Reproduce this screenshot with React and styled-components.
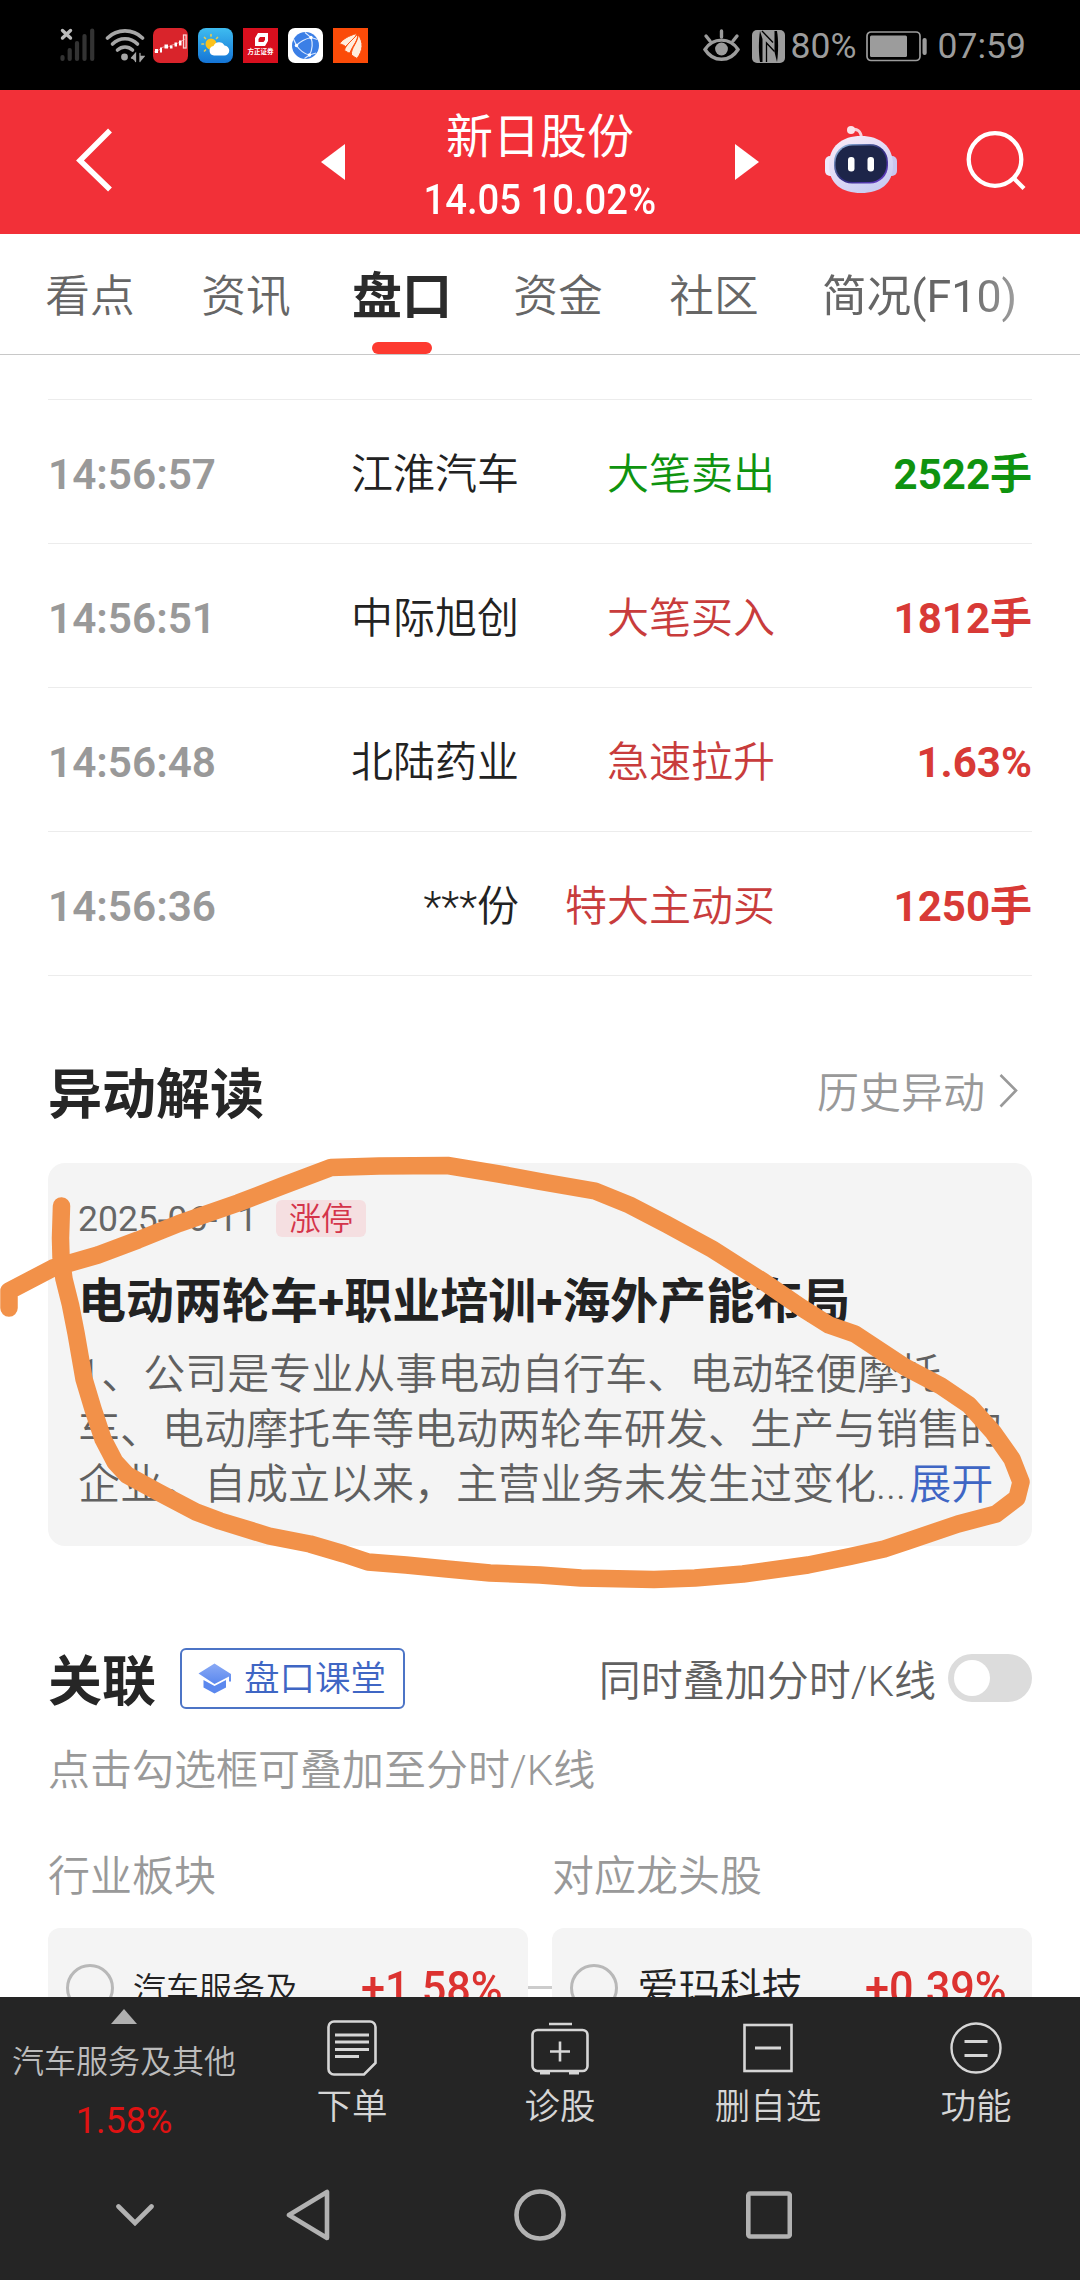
import React, { useState } from 'react'
import styled, { createGlobalStyle } from 'styled-components'

const trades = [
    { time: '14:56:57', name: '江淮汽车', type: '大笔卖出', value: '2522手', down: true },
    { time: '14:56:51', name: '中际旭创', type: '大笔买入', value: '1812手' },
    { time: '14:56:48', name: '北陆药业', type: '急速拉升', value: '1.63%' },
    { time: '14:56:36', name: '***份', type: '特大主动买', value: '1250手' },
]

const tabs = ['看点', '资讯', '盘口', '资金', '社区', '简况(F10)']

const related = [
    { label: '行业板块', name: '汽车服务及...', change: '+1.58%', small: true },
    { label: '对应龙头股', name: '爱玛科技', change: '+0.39%' },
]

const SignalIcon = () => (
    <svg width="36" height="35" viewBox="0 0 36 35">
        <g stroke="#333" strokeWidth="4.2" strokeLinecap="round">
            <path d="M2.5 29v2M9.700 22v9M17 15v16M24.500 8v23M32.200 2.500v28.500" />
        </g>
        <path d="M2.500 2.500l8 7.500M10.500 2.500l-8 7.500" stroke="#bbb" strokeWidth="3.4" strokeLinecap="round" />
    </svg>
)

const WifiIcon = () => (
    <svg width="40" height="35" viewBox="0 0 40 35" fill="none" stroke="#a6a6a6" strokeWidth="3.600" strokeLinecap="round">
        <path d="M2.500 10c9.500-9.500 25.500-9.500 35 0" />
        <path d="M7.500 16c7-7 18-7 25 0" />
        <path d="M12.500 22c4.500-4 10.500-4 15 0" />
        <circle cx="19.500" cy="29" r="3.400" fill="#a6a6a6" stroke="none" />
        <path d="M26.500 30l4-4.500v8M26.500 30h4M35 25.500v8M35 33l4-4.500h-4" strokeWidth="1.300" fill="#a6a6a6" />
    </svg>
)

const TrendAppIcon = () => (
    <svg width="35" height="35" viewBox="0 0 35 35">
        <rect width="35" height="35" rx="7" fill="#d9242b" />
        <path d="M1 24l5-2 4-3 5 0 4-2 4-1 4-2 5-3" fill="none" stroke="#f08a8d" strokeWidth="1" />
        <g fill="#fff">
            <rect x="2" y="21" width="3" height="4" />
            <rect x="7" y="19.500" width="2" height="5" />
            <rect x="11.500" y="16.500" width="3.500" height="4" />
            <rect x="17" y="17.500" width="2.500" height="3" />
            <rect x="21.500" y="14.500" width="2.500" height="4" />
            <rect x="26" y="12.500" width="2.500" height="5" />
        </g>
        <rect x="30.500" y="7" width="2.600" height="13" fill="none" stroke="#fbd3d4" strokeWidth="1.300" />
    </svg>
)

const WeatherAppIcon = () => (
    <svg width="35" height="35" viewBox="0 0 35 35">
        <defs>
            <linearGradient id="sky" x1="0" y1="0" x2="0" y2="1">
                <stop offset="0" stopColor="#3ebcf0" />
                <stop offset="1" stopColor="#1474d6" />
            </linearGradient>
        </defs>
        <rect width="35" height="35" rx="8" fill="url(#sky)" />
        <g stroke="#e3cc55" strokeWidth="1.700" strokeLinecap="round">
            <path d="M13 6.500v1.500M6.500 9.500l1 1M19.500 9.500l-1 1M4 16h1.500M6.500 23l1-1" />
        </g>
        <circle cx="13" cy="16" r="5.500" fill="#fbc21c" />
        <path d="M16 27.500a4.800 4.800 0 0 1-.500-9.500 6 6 0 0 1 11-.500 5 5 0 0 1-.500 10z" fill="#fff" />
    </svg>
)

const FounderAppIcon = () => (
    <FounderBox>
        <svg width="15" height="15" viewBox="0 0 15 15">
            <path d="M4 1h10v8l-3 5H1V6z" fill="#fff" />
            <path d="M6 5h5v3L9.500 10H4.500V7z" fill="#d80f1e" />
        </svg>
        <FounderName>方正证券</FounderName>
    </FounderBox>
)

const GlobeAppIcon = () => (
    <svg width="35" height="35" viewBox="0 0 35 35">
        <rect width="35" height="35" rx="7" fill="#fff" />
        <circle cx="17.500" cy="17.500" r="13.500" fill="#3b7fe6" />
        <g fill="none" stroke="#dceaff" strokeWidth="1.200">
            <path d="M17 4.500l6 5c2 6 1.500 12-1.500 17.500l-5 3.500M23 9.500C17 11 12 13.500 8.500 17.500c3.500 5 8 8.500 13 9.500l6.500-2M8.500 17.500L5.500 11M23 9.500l6.500 2" />
        </g>
        <circle cx="23" cy="9.500" r="1.700" fill="#fff" />
        <circle cx="8.500" cy="17.500" r="1.700" fill="#fff" />
        <circle cx="21.500" cy="27" r="1.700" fill="#fff" />
    </svg>
)

const FeatherAppIcon = () => (
    <svg width="35" height="35" viewBox="0 0 35 35">
        <rect width="35" height="35" fill="#fb4b08" />
        <g fill="#ffeedd" stroke="#fb4b08" strokeWidth="1">
            <path d="M6.500 16c3-5 9-8 17-10.500-1 6-7 9-11 13-2-1.500-4-2.500-6-2.500z" />
            <path d="M11.500 22.500c1-6 9-11 13-16.500 1 7-5 11-7.500 19-2 0-3.500-1.500-5.500-2.500z" />
            <path d="M18.500 27c-1-7 7-13 6.500-20.500 6 8 5 16-1 24-1.500-1-3.500-2-5.500-3.500z" />
        </g>
    </svg>
)

const EyeIcon = () => (
    <svg width="37" height="34" viewBox="0 0 37 34" fill="none" stroke="#9c9c9c" strokeWidth="3.400" strokeLinecap="round">
        <path d="M2 20.500c8-12.500 25-12.500 33 0-8 13-25 13-33 0z" />
        <circle cx="18.500" cy="20" r="6.400" fill="#9c9c9c" stroke="none" />
        <path d="M18.500 2v6M3 7l4 5M34 7l-4 5" />
    </svg>
)

const NfcIcon = () => (
    <svg width="33" height="33" viewBox="0 0 33 33">
        <rect width="33" height="33" rx="5" fill="#9c9c9c" />
        <path d="M8 1c-1.500 10-1.500 22 0 31h2.500V9z" fill="#000" />
        <path d="M25 32c1.500-10 1.500-22 0-31h-2.500v21z" fill="#000" />
        <path d="M14.500 32V13l8 8.500" stroke="#000" strokeWidth="1.300" fill="none" />
        <path d="M10 1l11 11.500" stroke="#000" strokeWidth="1.300" fill="none" />
    </svg>
)

const BatteryIcon = () => (
    <svg width="62" height="31" viewBox="0 0 62 31">
        <rect x="1" y="1" width="53" height="28.500" rx="4" fill="none" stroke="#9c9c9c" strokeWidth="1.700" />
        <rect x="4" y="4.500" width="37" height="21.500" rx="1.500" fill="#9c9c9c" />
        <rect x="56.500" y="7" width="4.200" height="17" rx="2" fill="#9c9c9c" />
    </svg>
)

const RobotIcon = () => (
    <svg width="74" height="70" viewBox="0 0 74 70">
        <defs>
            <linearGradient id="helmet" x1="0" y1="0" x2="0.600" y2="1">
                <stop offset="0" stopColor="#fbeef8" />
                <stop offset="0.500" stopColor="#e3dcf6" />
                <stop offset="1" stopColor="#c9cdf2" />
            </linearGradient>
            <linearGradient id="visor" x1="0" y1="0" x2="1" y2="1">
                <stop offset="0" stopColor="#a8d3f2" />
                <stop offset="0.500" stopColor="#2c2c78" />
                <stop offset="1" stopColor="#6b3fd0" />
            </linearGradient>
        </defs>
        <path d="M27 5c6-2 10 1 10.500 8" stroke="#f9cfd9" strokeWidth="3" fill="none" />
        <circle cx="27" cy="5" r="4" fill="#fbe2ea" />
        <rect x="1" y="31" width="13" height="20" rx="5" fill="#efe9fb" />
        <rect x="60" y="31" width="13" height="20" rx="5" fill="#c9c6ef" />
        <path d="M37 11c19 0 32 10 32 29s-13 28-32 28S5 59 5 40 18 11 37 11z" fill="url(#helmet)" />
        <rect x="10" y="19" width="54" height="39.500" rx="18" fill="url(#visor)" />
        <rect x="11.500" y="20.500" width="51" height="36.500" rx="17" fill="#1d2549" />
        <rect x="24" y="32" width="6.500" height="14.500" rx="3" fill="#fff" />
        <rect x="43.500" y="32" width="6.500" height="14.500" rx="3" fill="#fff" />
    </svg>
)

const SearchIcon = () => (
    <svg width="62" height="62" viewBox="0 0 62 62" fill="none" stroke="#fff" strokeWidth="4.300">
        <circle cx="30" cy="30.500" r="26.300" />
        <path d="M48.500 49l10.500 10.500" />
    </svg>
)

const CapIcon = () => (
    <svg width="34" height="31" viewBox="0 0 34 31">
        <defs>
            <linearGradient id="cap" x1="0" y1="0" x2="0" y2="1">
                <stop offset="0" stopColor="#8aaaf5" />
                <stop offset="1" stopColor="#5b88ee" />
            </linearGradient>
        </defs>
        <path d="M0.500 10.500L16.500 0.500l16.500 10.500v7.500h-2v-5L16.500 21z" fill="url(#cap)" />
        <path d="M5.500 17l11 6 11.500-6v7.500l-11.500 6-11-6z" fill="#5b88ee" />
    </svg>
)

const OrderIcon = () => (
    <svg width="50" height="56" viewBox="0 0 50 56" fill="none" stroke="#d6d6d6" strokeWidth="2.600">
        <path d="M7 1.500h36a5.500 5.500 0 0 1 5.500 5.500v36L37 54.500H7A5.500 5.500 0 0 1 1.500 49V7A5.500 5.500 0 0 1 7 1.500z" />
        <path d="M8 15h34M8 22h34M8 29.500h34M8 36.500h24" strokeWidth="2.800" />
    </svg>
)

const DiagnoseIcon = () => (
    <svg width="58" height="56" viewBox="0 0 58 56" fill="none" stroke="#d6d6d6" strokeWidth="2.600">
        <rect x="1.500" y="10" width="55" height="41" rx="5" />
        <path d="M18 4h23M19 31.500h20M29 21.500v20" />
        <path d="M9 52.500h10M38 52.500h10" strokeWidth="4" />
    </svg>
)

const RemoveIcon = () => (
    <svg width="50" height="56" viewBox="0 0 50 56" fill="none" stroke="#d6d6d6" strokeWidth="2.600">
        <rect x="1.500" y="5" width="47" height="46" />
        <path d="M12 28h26" strokeWidth="3" />
    </svg>
)

const MenuIcon = () => (
    <svg width="52" height="56" viewBox="0 0 52 56" fill="none" stroke="#d6d6d6" strokeWidth="2.400">
        <circle cx="26" cy="28" r="24.500" />
        <path d="M14.500 21.500h23M14.500 35.500h23" strokeWidth="2.800" />
    </svg>
)

const actions = [
    { label: '下单', icon: <OrderIcon /> },
    { label: '诊股', icon: <DiagnoseIcon /> },
    { label: '删自选', icon: <RemoveIcon /> },
    { label: '功能', icon: <MenuIcon /> },
]

// hand drawn marker around the explanation card
const Marker = () => (
    <MarkerLayer width="1080" height="460" viewBox="0 1140 1080 460">
        <path d="M9 1308V1291L53 1268 98 1255 138 1240 179 1223.500 238 1203 282 1186 331 1167.500 379 1166 447.500 1165.500 499 1174 540 1181.500 595 1191 629.500 1205 667 1224.500 712 1249 764 1282 802 1308 829 1325 855 1334 905 1367 941 1386 969 1405 993 1432 1012 1459 1021 1482 1017 1498 996 1514 958 1524 908 1541 884 1549 850 1556.500 808 1565 743 1574 695 1578 654 1579.500 581 1578 540 1575 490 1573 447 1569 406 1565 368 1562 344 1554 310 1544 269 1536 220 1521 196 1512 158 1492 127 1475 115 1462 103 1439 93 1409 84 1379 76 1333 70.500 1305 64 1279 61 1257 60.500 1238 61.500 1206" />
    </MarkerLayer>
)

const App = () => {
    const [active, setActive] = useState(2);
    const [overlay, setOverlay] = useState(false);

    return (
        <Page>
            <GlobalStyle />
            <StatusBar>
                <StatusIcons>
                    <SignalIcon />
                    <WifiIcon />
                    <TrendAppIcon />
                    <WeatherAppIcon />
                    <FounderAppIcon />
                    <GlobeAppIcon />
                    <FeatherAppIcon />
                </StatusIcons>
                <StatusInfo>
                    <EyeIcon />
                    <NfcIcon />
                    <StatusText $width={75}>80%</StatusText>
                    <BatteryIcon />
                    <StatusText>07:59</StatusText>
                </StatusInfo>
            </StatusBar>

            <Header>
                <BackButton>
                    <svg width="40" height="66" viewBox="0 0 40 66"><path d="M35 3.500L5 33.500l30 29" fill="none" stroke="#fff" strokeWidth="5.500" /></svg>
                </BackButton>
                <Stock>
                    <svg width="24" height="36" viewBox="0 0 24 36"><path d="M24 0v36L0 18z" fill="#fff" /></svg>
                    <StockInfo>
                        <StockName>新日股份</StockName>
                        <StockPrice>14.05 10.02%</StockPrice>
                    </StockInfo>
                    <svg width="24" height="36" viewBox="0 0 24 36"><path d="M0 0v36l24-18z" fill="#fff" /></svg>
                </Stock>
                <HeaderTools>
                    <RobotIcon />
                    <SearchIcon />
                </HeaderTools>
            </Header>

            <Tabs>
                {tabs.map((t, i) => {
                    return <Tab key={`tab${i}`} $active={i === active} $last={i === tabs.length - 1} onClick={() => setActive(i)}>{t}</Tab>
                })}
            </Tabs>

            <Content>
                <TradeList>
                    {trades.map((t, i) => {
                        return (
                            <TradeRow key={`trade${i}`}>
                                <TradeTime>{t.time}</TradeTime>
                                <TradeName>{t.name}</TradeName>
                                <TradeType $down={t.down}>{t.type}</TradeType>
                                <TradeValue $down={t.down}>{t.value}</TradeValue>
                            </TradeRow>
                        )
                    })}
                </TradeList>

                <SectionHead>
                    <SectionTitle>异动解读</SectionTitle>
                    <MoreLink>
                        历史异动
                        <svg width="19" height="36" viewBox="0 0 19 36"><path d="M1.500 2l15.500 15.500L1.500 33.500" fill="none" stroke="#999" strokeWidth="2.600" /></svg>
                    </MoreLink>
                </SectionHead>
                <ReasonCard>
                    <ReasonMeta>
                        <ReasonDate>2025-06-11</ReasonDate>
                        <ReasonTag>涨停</ReasonTag>
                    </ReasonMeta>
                    <ReasonTitle>电动两轮车+职业培训+海外产能布局</ReasonTitle>
                    <ReasonText>
                        1、公司是专业从事电动自行车、电动轻便摩托<br />
                        车、电动摩托车等电动两轮车研发、生产与销售的<br />
                        企业。自成立以来，主营业务未发生过变化...<Expand>展开</Expand>
                    </ReasonText>
                </ReasonCard>

                <RelatedHead>
                    <SectionTitle>关联</SectionTitle>
                    <LessonButton><CapIcon />盘口课堂</LessonButton>
                    <OverlayLabel>同时叠加分时/K线</OverlayLabel>
                    <Switch $on={overlay} onClick={() => setOverlay(!overlay)} />
                </RelatedHead>
                <Hint>点击勾选框可叠加至分时/K线</Hint>
                <RelatedGrid>
                    {related.map((r, i) => {
                        return (
                            <div key={`related${i}`}>
                                <RelatedLabel>{r.label}</RelatedLabel>
                                <RelatedCard $linked={i > 0}>
                                    <Radio />
                                    <RelatedName $small={r.small}>{r.name}</RelatedName>
                                    <RelatedChange>{r.change}</RelatedChange>
                                </RelatedCard>
                            </div>
                        )
                    })}
                </RelatedGrid>
            </Content>

            <BottomBar>
                <Sector>
                    <svg width="26" height="15" viewBox="0 0 26 15"><path d="M13 0l13 15H0z" fill="#b0b0b0" /></svg>
                    <SectorName>汽车服务及其他</SectorName>
                    <SectorChange>1.58%</SectorChange>
                </Sector>
                {actions.map((a, i) => {
                    return <Action key={`action${i}`}>{a.icon}<span>{a.label}</span></Action>
                })}
            </BottomBar>
            <NavBar>
                <svg width="38" height="22" viewBox="0 0 38 22"><path d="M2.500 2.500L19 19 35.500 2.500" /></svg>
                <svg width="48" height="52" viewBox="0 0 48 52"><path d="M41 3v46L3 26z" strokeLinejoin="round" /></svg>
                <svg width="52" height="52" viewBox="0 0 52 52"><circle cx="26" cy="26" r="23.500" /></svg>
                <svg width="46" height="48" viewBox="0 0 46 48"><rect x="2.300" y="2.500" width="41.500" height="43" rx="2" /></svg>
            </NavBar>
            <Marker />
        </Page>
    )
}

export default App;

const GlobalStyle = createGlobalStyle`
    * {
        box-sizing: border-box;
    }
    body {
        margin: 0;
        background: #fff;
    }
    svg {
        display: block;
        flex: none;
    }
`

const Page = styled.div`
    position: relative;
    width: 1080px;
    height: 2280px;
    overflow: hidden;
    background: #fff;
    color: #222;
    font-family: Roboto, "Noto Sans CJK SC", sans-serif;
    font-size: 42px;
    font-weight: 350;
    white-space: nowrap;
`

const StatusBar = styled.div`
    display: flex;
    justify-content: space-between;
    height: 90px;
    padding: 28px 54px 0 60px;
    background: #000;
`

const StatusIcons = styled.div`
    display: flex;
    align-items: flex-start;
    gap: 10px;

    svg:first-child {
        margin-right: -1px;
    }
    svg:nth-child(2) {
        margin-right: -2px;
    }
`

const FounderBox = styled.div`
    display: flex;
    flex-direction: column;
    align-items: center;
    width: 35px;
    height: 35px;
    padding-top: 4px;
    background: #d80f1e;
`

const FounderName = styled.span`
    color: #fff;
    font-size: 6.5px;
    font-weight: 700;
    line-height: 10px;
`

const StatusInfo = styled.div`
    display: flex;
    align-items: center;
    height: 36px;

    svg:nth-child(1) {
        margin-left: -1px;
    }
    svg:nth-child(2) {
        margin: 0 6px 0 12px;
    }
    svg:nth-child(4) {
        margin-right: 10px;
    }
`

const StatusText = styled.span`
    width: ${props => props.$width ? `${props.$width}px` : 'auto'};
    color: #9c9c9c;
    font-size: 35.5px;
    font-weight: 400;
    line-height: 38px;
`

const Header = styled.header`
    display: grid;
    grid-template-columns: 321px 438px 1fr;
    align-items: center;
    height: 144px;
    background: #f23038;
    color: #fff;
`

const BackButton = styled.div`
    padding: 0 0 4px 75px;
`

const Stock = styled.div`
    display: flex;
    align-items: center;
    justify-content: space-between;
`

const StockInfo = styled.div`
    display: flex;
    flex-direction: column;
    align-items: center;
    padding-top: 14px;
`

const StockName = styled.div`
    font-size: 47px;
    font-weight: 400;
    line-height: 62px;
`

const StockPrice = styled.div`
    font-size: 42px;
    font-weight: 500;
    line-height: 64px;
    transform: scaleX(0.91);
`

const HeaderTools = styled.div`
    display: flex;
    align-items: center;
    justify-content: space-between;
    padding: 0 53px 4px 65px;
`

const Tabs = styled.nav`
    display: flex;
    height: 121px;
    padding-left: 12px;
    border-bottom: 1px solid #c8c8c8;
`

const Tab = styled.div`
    display: flex;
    flex-direction: column;
    align-items: center;
    width: ${props => props.$last ? '255px' : '156px'};
    padding-top: 32px;
    color: ${props => props.$active ? '#2b2b2b' : '#666'};
    font-size: ${props => props.$active ? '50px' : '44.7px'};
    font-weight: ${props => props.$active ? 700 : props.$last ? 380 : 350};
    line-height: 62px;
    mask-image: ${props => props.$last ? 'linear-gradient(to right, #000 175px, rgba(0, 0, 0, 0.55) 235px)' : 'none'};

    &::after {
        content: '';
        width: 60px;
        height: 12px;
        margin-top: 14px;
        border-radius: 6px;
        background: ${props => props.$active ? '#fd3a30' : 'transparent'};
    }
`

const Content = styled.main`
    height: 1642px;
    padding: 44px 48px 0;
    overflow: hidden;
`

const TradeList = styled.div`
    border-top: 1px solid #ececec;
`

const TradeRow = styled.div`
    display: grid;
    grid-template-columns: 200px 271px 256px 257px;
    align-items: center;
    height: 144px;
    padding-top: 6px;
    border-bottom: 1px solid #ececec;
    line-height: 60px;
    text-align: right;
`

const TradeTime = styled.span`
    color: #999;
    font-size: 42.3px;
    font-weight: 600;
    text-align: left;
`

const TradeName = styled.span`
    color: #222;
`

const TradeType = styled.span`
    color: ${props => props.$down ? '#0f930f' : '#c83c3c'};
`

const TradeValue = styled.span`
    color: ${props => props.$down ? '#0f930f' : '#d83a36'};
    font-weight: 700;
`

const SectionHead = styled.div`
    display: flex;
    align-items: center;
    justify-content: space-between;
    height: 140px;
    margin-top: 47px;
`

const SectionTitle = styled.h2`
    margin: 0;
    padding-top: 5px;
    color: #262626;
    font-size: 54px;
    font-weight: 700;
    line-height: 72px;
`

const MoreLink = styled.a`
    display: flex;
    align-items: center;
    gap: 14px;
    padding: 2px 14px 0 0;
    color: #999;
    line-height: 60px;

    svg {
        margin-top: -7px;
    }
`

const ReasonCard = styled.section`
    height: 383px;
    padding: 34px 30px 0;
    border-radius: 17px;
    background: #f4f4f4;
`

const ReasonMeta = styled.div`
    display: flex;
    align-items: center;
    height: 42px;
`

const ReasonDate = styled.span`
    width: 198px;
    padding-top: 2px;
    color: #666;
    font-size: 35.5px;
    font-weight: 400;
`

const ReasonTag = styled.span`
    width: 90px;
    height: 37px;
    border-radius: 6px;
    background: #f5dfe1;
    color: #d4344a;
    font-size: 32px;
    line-height: 38px;
    text-align: center;
`

const ReasonTitle = styled.h3`
    margin: 35px 0 0;
    color: #222;
    font-size: 48px;
    font-weight: 700;
    line-height: 56px;
`

const ReasonText = styled.p`
    margin: 17px 0 0;
    color: #606060;
    line-height: 55px;
`

const Expand = styled.a`
    padding-left: 3px;
    color: #3f66c4;
`

const RelatedHead = styled.div`
    display: flex;
    align-items: center;
    height: 92px;
    margin-top: 88px;
`

const LessonButton = styled.button`
    display: flex;
    align-items: center;
    gap: 12px;
    width: 225px;
    height: 61px;
    margin: 0 auto 3px 24px;
    padding: 0 0 0 16px;
    border: 2px solid #4c74c6;
    border-radius: 6px;
    background: #fff;
    color: #3f66c4;
    font: inherit;
    font-size: 35.5px;
    line-height: 50px;
`

const OverlayLabel = styled.span`
    margin-right: 12px;
    padding-top: 3px;
    color: #606060;
    line-height: 60px;
`

const Switch = styled.div`
    display: flex;
    justify-content: ${props => props.$on ? 'flex-end' : 'flex-start'};
    width: 84px;
    height: 48px;
    margin-bottom: 4px;
    padding: 6px;
    border-radius: 24px;
    background: ${props => props.$on ? '#3f66c4' : '#dcdcdc'};

    &::after {
        content: '';
        width: 36px;
        height: 36px;
        border-radius: 50%;
        background: #fff;
    }
`

const Hint = styled.p`
    margin: 15px 0 46px;
    color: #999;
    line-height: 60px;
`

const RelatedGrid = styled.div`
    display: grid;
    grid-template-columns: 1fr 1fr;
    gap: 24px;
`

const RelatedLabel = styled.div`
    margin-bottom: 21px;
    color: #999;
    line-height: 60px;
`

const RelatedCard = styled.div`
    position: relative;
    display: flex;
    align-items: center;
    height: 120px;
    padding: 0 25px 0 18px;
    border-radius: 12px;
    background: #f4f4f4;

    &::before {
        content: '';
        position: absolute;
        left: -24px;
        top: 58px;
        width: 24px;
        height: 3px;
        background: ${props => props.$linked ? '#ccc' : 'transparent'};
    }
`

const Radio = styled.span`
    width: 48px;
    height: 48px;
    margin-right: 19px;
    border: 3px solid #b8b8b8;
    border-radius: 50%;
`

const RelatedName = styled.span`
    margin-right: auto;
    padding-top: 4px;
    color: #222;
    font-size: ${props => props.$small ? '33px' : '41.5px'};
    line-height: 60px;
`

const RelatedChange = styled.span`
    color: #dc3230;
    font-size: 46px;
    font-weight: 500;
    transform: scaleX(0.94);
    transform-origin: right;
`

const BottomBar = styled.footer`
    display: grid;
    grid-template-columns: 248px repeat(4, 208px);
    height: 153px;
    background: #252525;
`

const Sector = styled.div`
    display: flex;
    flex-direction: column;
    align-items: center;
    padding-top: 12px;
`

const SectorName = styled.span`
    margin-top: 12px;
    color: #bcbcbc;
    font-size: 32px;
    line-height: 52px;
`

const SectorChange = styled.span`
    margin-top: 7px;
    color: #e01212;
    font-size: 36px;
    font-weight: 400;
    line-height: 52px;
`

const Action = styled.div`
    display: flex;
    flex-direction: column;
    align-items: center;
    padding-top: 23px;
    color: #d6d6d6;
    font-size: 35.5px;
    line-height: 62px;
`

const NavBar = styled.div`
    display: grid;
    grid-template-columns: 180px 170px 290px 168px;
    align-items: center;
    justify-items: center;
    height: 130px;
    padding-left: 45px;
    background: #252525;

    svg {
        fill: none;
        stroke: #b2b2b2;
        stroke-width: 4.6;
        stroke-linecap: round;
    }
`

const MarkerLayer = styled.svg`
    position: absolute;
    left: 0;
    top: 1140px;
    fill: none;
    stroke: #f29149;
    stroke-width: 17.5;
    stroke-linecap: round;
    stroke-linejoin: round;
    pointer-events: none;
`
